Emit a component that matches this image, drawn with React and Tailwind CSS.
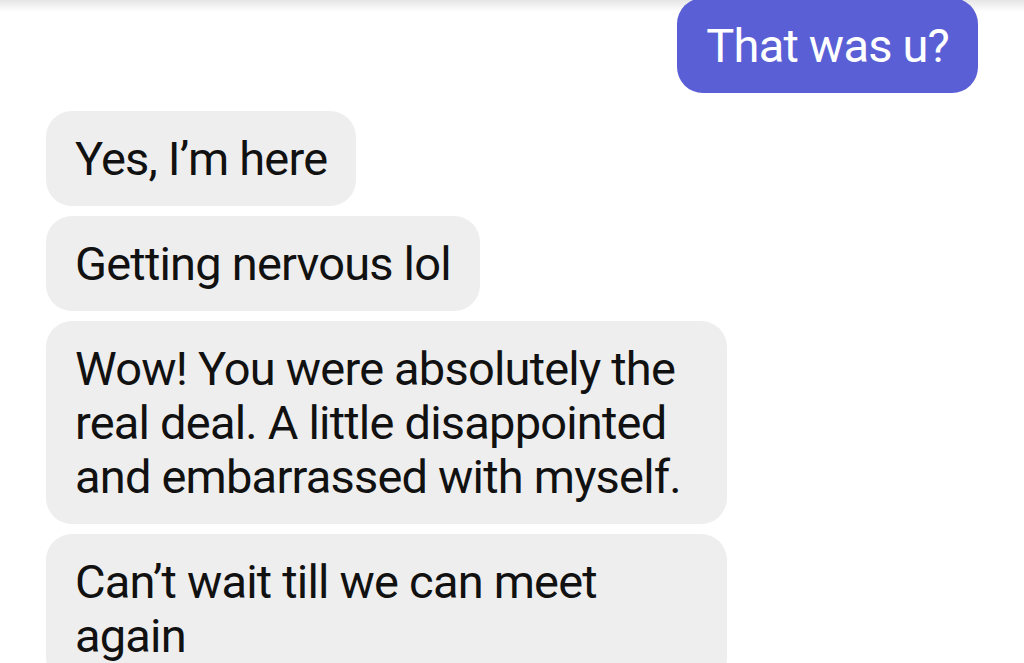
import React from 'react';

const Bubble = ({ mine, wide, children }) => (
  <div
    className={`rounded-[26px] px-[29px] py-[20.5px] text-[47px] leading-[54px] tracking-[-0.8px] ${
      mine
        ? 'self-end bg-[#5a5fd6] text-white'
        : 'self-start bg-[#eeeeee] text-[#111111]'
    } ${wide ? 'w-[681px]' : 'w-fit'}`}
  >
    {children}
  </div>
);

export default function App() {
  return (
    <div className="relative h-[663px] w-[1024px] overflow-hidden bg-white font-['Roboto',sans-serif]">
      <div className="pointer-events-none absolute inset-x-0 top-0 h-[12px] bg-gradient-to-b from-[#e6e6e6] to-white/0" />
      <div className="relative flex flex-col px-[46px] pt-0">
        <div className="-mt-[2px] mb-[8px] flex justify-end">
          <Bubble mine>That was u?</Bubble>
        </div>
        <div className="flex flex-col gap-[10px] pt-[10px]">
          <Bubble>Yes, I’m here</Bubble>
          <Bubble>Getting nervous lol</Bubble>
          <Bubble wide>
            Wow! You were absolutely the
            <br />
            real deal. A little disappointed
            <br />
            and embarrassed with myself.
          </Bubble>
          <Bubble wide>
            Can’t wait till we can meet
            <br />
            again
          </Bubble>
        </div>
      </div>
    </div>
  );
}
